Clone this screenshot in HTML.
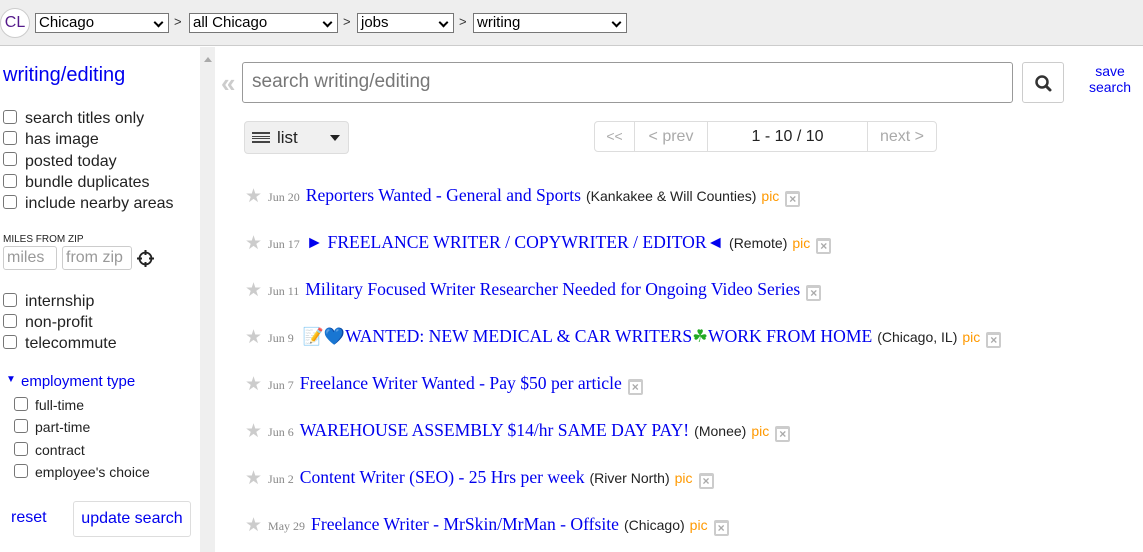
<!DOCTYPE html>
<html><head><meta charset="utf-8"><style>
*{box-sizing:border-box;margin:0;padding:0}
body{width:1143px;height:552px;overflow:hidden;background:#fff;font-family:"Liberation Sans",Arial,sans-serif;position:relative;color:#222}
.hdr{position:absolute;left:0;top:0;width:1143px;height:46px;background:#eee;border-bottom:1px solid #ccc}
.cl{position:absolute;left:0;top:8px;width:30px;height:30px;border-radius:50%;background:#fff;border:1px solid #ccc;color:#551a8b;font-size:16px;line-height:28px;text-align:center}
.sel{position:absolute;top:13px;height:20px;border:1px solid #767676;background:#fff;font-size:15px;line-height:18px;padding-left:3px;color:#000}
.sel:after{content:"";position:absolute;right:6px;top:5px;width:5px;height:5px;border-right:2px solid #000;border-bottom:2px solid #000;transform:rotate(45deg)}
.gt{position:absolute;top:14px;font-size:13px;color:#333}
.side{position:absolute;left:200px;top:47px;width:15px;height:505px;background:#efefef}
.abs{position:absolute}
.cb{position:absolute;width:14px;height:14px;border:1px solid #767676;border-radius:3px;background:#fff}
.lbl{position:absolute;font-size:16px;color:#222}
.lbl2{position:absolute;font-size:14px;color:#222}
.row{position:absolute;left:245px;display:flex;align-items:baseline;white-space:nowrap}
.star{color:#ccc;font-size:19px;margin-right:6px;position:relative;top:1px}
.date{font-family:"Liberation Serif",serif;font-size:12px;color:#888;margin-right:6px}
.t{font-family:"Liberation Serif",serif;font-size:17.6px;color:#00e}
.h{font-size:14px;color:#222;margin-left:5px}
.pic{font-size:14px;color:#f90;margin-left:5px}
.tr{display:inline-block;width:15px;height:16px;border:2px solid #ccc;border-top-width:3px;border-radius:2px;margin-left:6px;position:relative;top:2px;color:#aaa;font-size:12px;font-weight:bold;line-height:11px;text-align:center}
</style></head><body>
<div class="hdr">
<div class="cl">CL</div>
<div class="sel" style="left:35px;width:134px">Chicago</div><span class="gt" style="left:174px">&gt;</span>
<div class="sel" style="left:189px;width:149px">all Chicago</div><span class="gt" style="left:343px">&gt;</span>
<div class="sel" style="left:357px;width:97px">jobs</div><span class="gt" style="left:459px">&gt;</span>
<div class="sel" style="left:473px;width:154px">writing</div>
</div>
<div class="side"><div class="abs" style="left:4px;top:6px;width:0;height:0;border:4px solid transparent;border-bottom:5px solid #aaa"></div></div>

<div class="abs" style="left:3px;top:64px;font-size:20px;color:#00e">writing/editing</div>
<div class="cb" style="left:3px;top:110px"></div><div class="lbl" style="left:25px;top:110px">search titles only</div>
<div class="cb" style="left:3px;top:131px"></div><div class="lbl" style="left:25px;top:131px">has image</div>
<div class="cb" style="left:3px;top:152px"></div><div class="lbl" style="left:25px;top:153px">posted today</div>
<div class="cb" style="left:3px;top:174px"></div><div class="lbl" style="left:25px;top:174px">bundle duplicates</div>
<div class="cb" style="left:3px;top:195px"></div><div class="lbl" style="left:25px;top:195px">include nearby areas</div>
<div class="abs" style="left:3px;top:234px;font-size:10px;color:#222">MILES FROM ZIP</div>
<div class="abs" style="left:3px;top:246px;width:54px;height:24px;border:1px solid #ccc;border-radius:3px;font-size:16px;color:#999;padding:2px 3px">miles</div>
<div class="abs" style="left:62px;top:246px;width:70px;height:24px;border:1px solid #ccc;border-radius:3px;font-size:16px;color:#999;padding:2px 3px">from zip</div>
<svg class="abs" style="left:136px;top:249px" width="19" height="19" viewBox="0 0 19 19"><circle cx="9.5" cy="9.5" r="6" fill="none" stroke="#222" stroke-width="1.8"/><path d="M9.5 1v5M9.5 13v5M1 9.5h5M13 9.5h5" stroke="#222" stroke-width="2"/></svg>
<div class="cb" style="left:3px;top:293px"></div><div class="lbl" style="left:25px;top:293px">internship</div>
<div class="cb" style="left:3px;top:314px"></div><div class="lbl" style="left:25px;top:314px">non-profit</div>
<div class="cb" style="left:3px;top:335px"></div><div class="lbl" style="left:25px;top:335px">telecommute</div>
<div class="abs" style="left:6px;top:374px;font-size:10px;color:#00e">▼</div>
<div class="abs" style="left:21px;top:373px;font-size:15px;color:#00e">employment type</div>
<div class="cb" style="left:14px;top:397px"></div><div class="lbl2" style="left:35px;top:397px">full-time</div>
<div class="cb" style="left:14px;top:419px"></div><div class="lbl2" style="left:35px;top:419px">part-time</div>
<div class="cb" style="left:14px;top:442px"></div><div class="lbl2" style="left:35px;top:442px">contract</div>
<div class="cb" style="left:14px;top:464px"></div><div class="lbl2" style="left:35px;top:464px">employee's choice</div>
<div class="abs" style="left:11px;top:509px;font-size:16px;color:#00e">reset</div>
<div class="abs" style="left:73px;top:501px;width:118px;height:36px;border:1px solid #ddd;border-radius:3px;font-size:16px;color:#00e;text-align:center;line-height:34px">update search</div>

<div class="abs" style="left:221px;top:68px;font-size:26px;color:#ccc;line-height:30px;font-weight:bold">«</div>
<div class="abs" style="left:242px;top:62px;width:771px;height:41px;border:1px solid #999;border-radius:3px;font-size:19px;color:#777;padding:8px 9px">search writing/editing</div>
<div class="abs" style="left:1022px;top:62px;width:42px;height:41px;border:1px solid #ccc;border-radius:3px">
<svg width="40" height="39" viewBox="0 0 40 39"><circle cx="19" cy="19" r="5.5" fill="none" stroke="#333" stroke-width="2.5"/><line x1="23" y1="23" x2="27" y2="27" stroke="#333" stroke-width="3" stroke-linecap="round"/></svg></div>
<div class="abs" style="left:1088px;top:63px;font-size:14px;color:#00e;text-align:center;line-height:16px;width:44px">save<br>search</div>

<div class="abs" style="left:244px;top:121px;width:105px;height:33px;border:1px solid #ddd;border-radius:4px;background:#f0f0f0">
<div class="abs" style="left:7px;top:10px;width:18px;height:11px;border-top:2px solid #444;border-bottom:2px solid #444"></div>
<div class="abs" style="left:7px;top:14px;width:18px;height:3px;border-top:1px solid #444;border-bottom:1px solid #444"></div>
<div class="abs" style="left:32px;top:6px;font-size:17px;color:#222">list</div>
<div class="abs" style="left:85px;top:13px;border:5px solid transparent;border-top:6px solid #222"></div>
</div>
<div class="abs" style="left:594px;top:121px;width:343px;height:31px;border:1px solid #ddd;border-radius:4px;font-size:16px;line-height:29px">
<span class="abs" style="left:0;width:39px;text-align:center;color:#aaa;font-size:14px">&lt;&lt;</span>
<span class="abs" style="left:39px;top:0;height:29px;border-left:1px solid #ddd"></span>
<span class="abs" style="left:40px;width:72px;text-align:center;color:#aaa">&lt; prev</span>
<span class="abs" style="left:112px;top:0;height:29px;border-left:1px solid #ddd"></span>
<span class="abs" style="left:113px;width:159px;text-align:center;color:#222">1 - 10 / 10</span>
<span class="abs" style="left:272px;top:0;height:29px;border-left:1px solid #ddd"></span>
<span class="abs" style="left:273px;width:68px;text-align:center;color:#aaa">next &gt;</span>
</div>

<div class="row" style="top:184px"><span class="star">★</span><span class="date">Jun 20</span><span class="t">Reporters Wanted - General and Sports</span><span class="h">(Kankakee &amp; Will Counties)</span><span class="pic">pic</span><span class="tr">×</span></div>
<div class="row" style="top:231px"><span class="star">★</span><span class="date">Jun 17</span><span class="t">► FREELANCE WRITER / COPYWRITER / EDITOR◄</span><span class="h">(Remote)</span><span class="pic">pic</span><span class="tr">×</span></div>
<div class="row" style="top:278px"><span class="star">★</span><span class="date">Jun 11</span><span class="t">Military Focused Writer Researcher Needed for Ongoing Video Series</span><span class="tr">×</span></div>
<div class="row" style="top:325px"><span class="star">★</span><span class="date">Jun 9</span><span class="t"><span style="font-size:17px;margin-left:3px">📝💙</span>WANTED: NEW MEDICAL &amp; CAR WRITERS<span style="color:#2a2">☘</span>WORK FROM HOME</span><span class="h">(Chicago, IL)</span><span class="pic">pic</span><span class="tr">×</span></div>
<div class="row" style="top:372px"><span class="star">★</span><span class="date">Jun 7</span><span class="t">Freelance Writer Wanted - Pay $50 per article</span><span class="tr">×</span></div>
<div class="row" style="top:419px"><span class="star">★</span><span class="date">Jun 6</span><span class="t">WAREHOUSE ASSEMBLY $14/hr SAME DAY PAY!</span><span class="h">(Monee)</span><span class="pic">pic</span><span class="tr">×</span></div>
<div class="row" style="top:466px"><span class="star">★</span><span class="date">Jun 2</span><span class="t">Content Writer (SEO) - 25 Hrs per week</span><span class="h">(River North)</span><span class="pic">pic</span><span class="tr">×</span></div>
<div class="row" style="top:513px"><span class="star">★</span><span class="date">May 29</span><span class="t">Freelance Writer - MrSkin/MrMan - Offsite</span><span class="h">(Chicago)</span><span class="pic">pic</span><span class="tr">×</span></div>
</body></html>
